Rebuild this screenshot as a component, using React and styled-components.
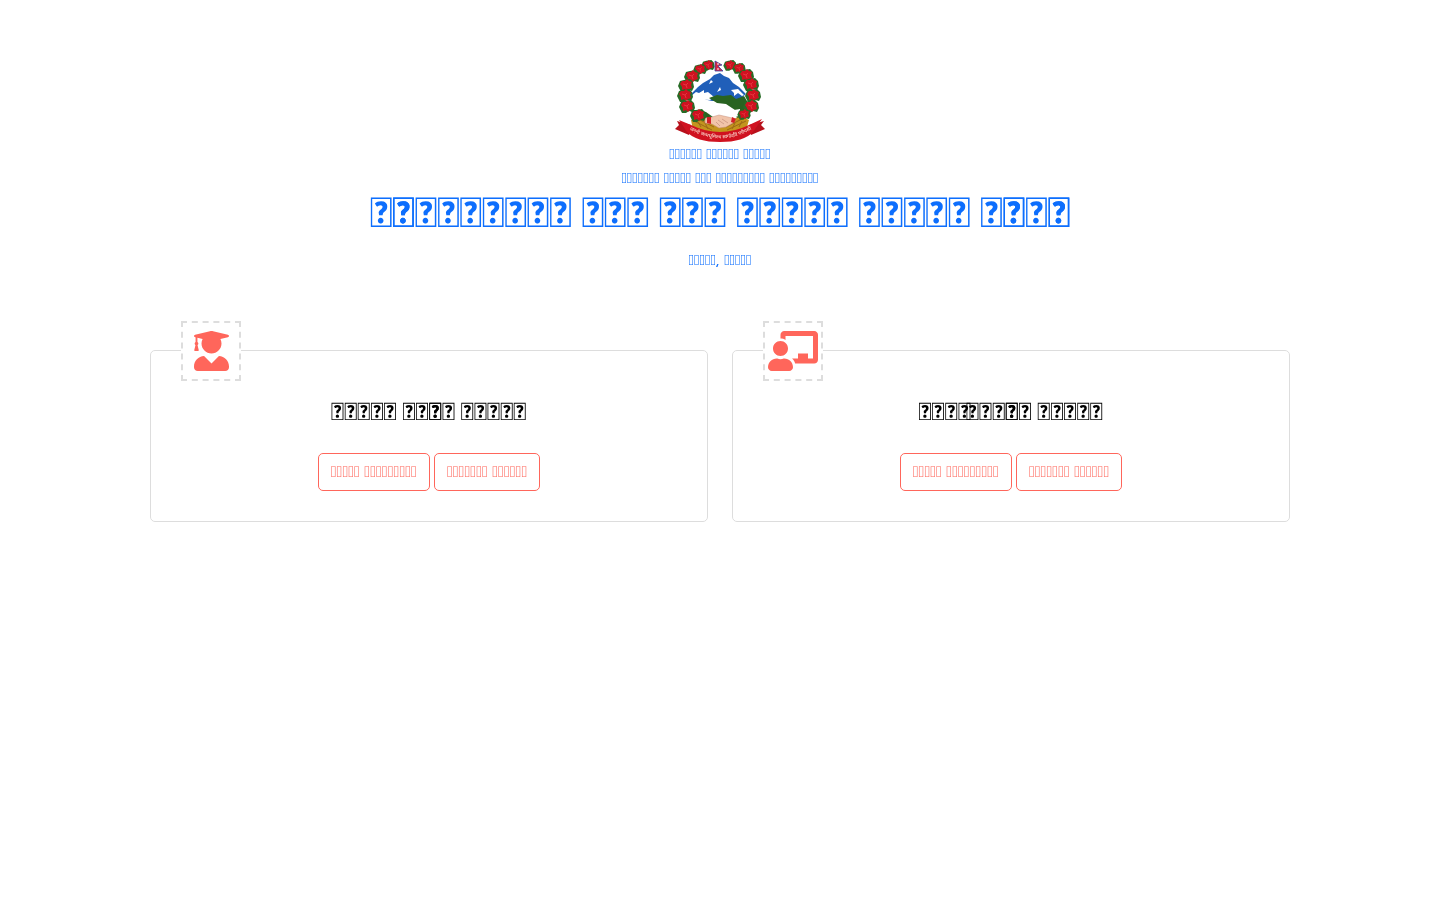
import React from "react";
import styled, { createGlobalStyle } from "styled-components";
import { FaUserGraduate, FaChalkboardTeacher } from "react-icons/fa";

const GlobalStyle = createGlobalStyle`
  * { box-sizing: border-box; }
  body {
    margin: 0;
    background: #fff;
    font-family: Cantarell, "Roboto Condensed", Roboto, sans-serif;
    font-size: 15px;
    line-height: 24px;
  }
`;

const Page = styled.div`
  padding: 60px 0;
  will-change: transform;
`;

const Header = styled.header`
  display: flex;
  flex-direction: column;
  align-items: center;
  text-align: center;
  color: #0d6efd;
`;

const Emblem = styled.svg`
  display: block;
  width: 92px;
  height: 82px;
`;

const Line = styled.p`
  margin: 0;
`;

const OfficeName = styled.h1`
  margin: 0 0 14px;
  font: 700 41px/44px Lato, sans-serif;
`;

const Services = styled.main`
  display: grid;
  grid-template-columns: 1fr 1fr;
  gap: 24px;
  max-width: 1164px;
  margin: 78px auto 0;
  padding: 0 12px;
`;

const Card = styled.section`
  position: relative;
  padding: 45px 30px 30px;
  border: 1px solid #ddd;
  border-radius: 5px;
  text-align: center;
`;

const IconBadge = styled.div`
  position: absolute;
  top: -30px;
  left: 30px;
  display: flex;
  align-items: center;
  justify-content: center;
  width: 60px;
  height: 60px;
  border: 2px dashed #ddd;
  background: #fff;
  color: #ff665b;

  svg {
    flex: none;
    width: ${(p) => p.$iconWidth}px;
    height: 40px;
  }
`;

const CardTitle = styled.h3`
  margin: 0 0 28px;
  font: 700 24px/29px Lato, sans-serif;
  color: #000;
`;

const Actions = styled.div`
  display: flex;
  justify-content: center;
  gap: 4px;
`;

const ActionLink = styled.a`
  padding: 5px 12px 7px;
  border: 1px solid #ff665b;
  border-radius: 5px;
  color: #ff665b;
  font-size: 16px;
  line-height: 24px;
  text-decoration: none;
`;

/* A combining sign: its glyph is drawn over the letter that follows it. */
const Sign = styled.span`
  display: inline-block;
  width: ${(p) => p.$advance}px;
`;

const LETTER = "\uE123";
const words = (...lengths) => lengths.map((n) => LETTER.repeat(n)).join(" ");
const mark = <Sign $advance={0}>{LETTER}</Sign>;
const halfForm = <Sign $advance={8}>{LETTER}</Sign>;

const flowers = [
  [34, 5, 5], [26, 9, 5], [18, 16, 6], [12, 25, 6], [11, 35, 6], [13, 46, 6], [24, 55, 6],
  [56, 5, 5], [65, 8, 5], [72, 15, 6], [77, 24, 6], [79, 35, 6], [77, 46, 6], [70, 54, 5],
];

function Flower({ x, y, r }) {
  return (
    <g transform={`translate(${x} ${y}) scale(${r / 6})`}>
      <path d="M-8 1L-6-4-2-5 4-6 7-3 8 2 6 6 2 5-1 7-5 7z" fill="#276b25" />
      <path d="M-6-1L-4-4-1-4 1-6 3-4 6-3 5 0 6 3 3 4 1 6-1 4-4 5-4 2z" fill="#cf1220" />
      <path d="M-3-1L0 0 2-2M0 0L1 3" stroke="#ea3b46" strokeWidth=".8" fill="none" />
    </g>
  );
}

function NepalEmblem() {
  return (
    <Emblem viewBox="0 0 92 82" role="img" aria-label="Emblem of Nepal">
      <path d="M15 36L24 27 29 23 36 19 40 15 46 13 50 16 55 18 59 23 65 27 72 34 64 41 38 41z" fill="#205fb9" />
      <path d="M17 36L22 32 25 33 30 30 30 33 34 32 40 37 36 40 20 39zM57 30l3 3 0 3 4-3 4 3 2-1-6-6zM46 27l-3 5 4-2zM37 20l-2 4 4-2z" fill="#fff" />
      <path d="M35 38L43 35 49 36 57 35 62 39 70 36 76 46 72 59 63 59 61 50 52 44 43 43z" fill="#286321" />
      <path d="M17 50L24 50 32 52 39 57 29 61 20 59z" fill="#286321" />
      <path d="M21 34L29 37 34 42 42 43 46 46 54 47 60 50 66 49 66 56 58 57 48 55 37 54 31 49 22 46 19 40z" fill="#fff" />
      <path d="M17 60Q24 55 33 59L46 65 59 59Q68 55 75 60L72 70Q46 81 19 70z" fill="#c3951e" />
      <path d="M20 61L38 70M24 59L40 67M72 61L53 70M68 59L52 67M27 67l-3-5M34 69l-3-6M58 69l3-6M65 67l3-6" stroke="#9c6817" strokeWidth="1" fill="none" />
      <path d="M31 58L38 57 45 55 54 57 62 59 59 63 52 67 45 68 38 64 31 63z" fill="#f1c4aa" stroke="#c78e7b" strokeWidth=".5" />
      <path d="M44 60L50 64M48 59L54 63M42 62L46 66" stroke="#bd8574" strokeWidth=".6" />
      <path d="M33 57l4 0v7l-4-1zM58 57l4 2-2 4-3-1z" fill="#d32027" />
      {flowers.map(([x, y, r]) => (
        <Flower key={`${x}-${y}`} x={x} y={y} r={r} />
      ))}
      <path d="M17 65L3 61 5 65 1 69 15 75zM75 65L90 61 87 65 91 69 77 75z" fill="#b8101b" />
      <path d="M5 60L17 65Q46 79 75 65L88 59 79 72Q70 82 46 82T13 72z" fill="#d01220" />
      <path id="motto-curve" d="M16 70Q46 87 77 70" fill="none" />
      <text fill="#ffe9dc" fontFamily="Noto Sans, sans-serif" fontSize="5">
        <textPath href="#motto-curve" startOffset="50%" textAnchor="middle">
          जननी जन्मभूमिश्च स्वर्गादपि गरीयसी
        </textPath>
      </text>
      <path d="M41 1L48 5 44 6 49 11 41 11z" fill="#d32643" stroke="#38489e" strokeWidth=".8" />
      <path d="M43 4h2M43 9h2" stroke="#fff" />
    </Emblem>
  );
}

const cards = [
  {
    id: "student",
    Icon: FaUserGraduate,
    iconWidth: 35,
    title: <>{words(5, 2)}{mark}{words(2, 5)}</>,
  },
  {
    id: "trainer",
    Icon: FaChalkboardTeacher,
    iconWidth: 50,
    title: <>{words(3)}{halfForm}{words(3)}{mark}{words(2, 5)}</>,
  },
];

export default function App() {
  return (
    <>
      <GlobalStyle />
      <Page>
        <Header>
          <NepalEmblem />
          <Line>{words(6, 6, 5)}</Line>
          <Line>{words(7, 5, 3, 9, 9)}</Line>
          <OfficeName>
            {words(1)}{mark}{words(8, 3, 3, 5, 5, 1)}{mark}{words(2)}{mark}{words(1)}
          </OfficeName>
          <Line>{`${words(5)}, ${words(5)}`}</Line>
        </Header>
        <Services>
          {cards.map(({ id, Icon, iconWidth, title }) => (
            <Card key={id}>
              <IconBadge $iconWidth={iconWidth}>
                <Icon aria-hidden="true" />
              </IconBadge>
              <CardTitle>{title}</CardTitle>
              <Actions>
                <ActionLink href={`#${id}-details`}>{words(5, 9)}</ActionLink>
                <ActionLink href={`#${id}-form`}>{words(7, 6)}</ActionLink>
              </Actions>
            </Card>
          ))}
        </Services>
      </Page>
    </>
  );
}
